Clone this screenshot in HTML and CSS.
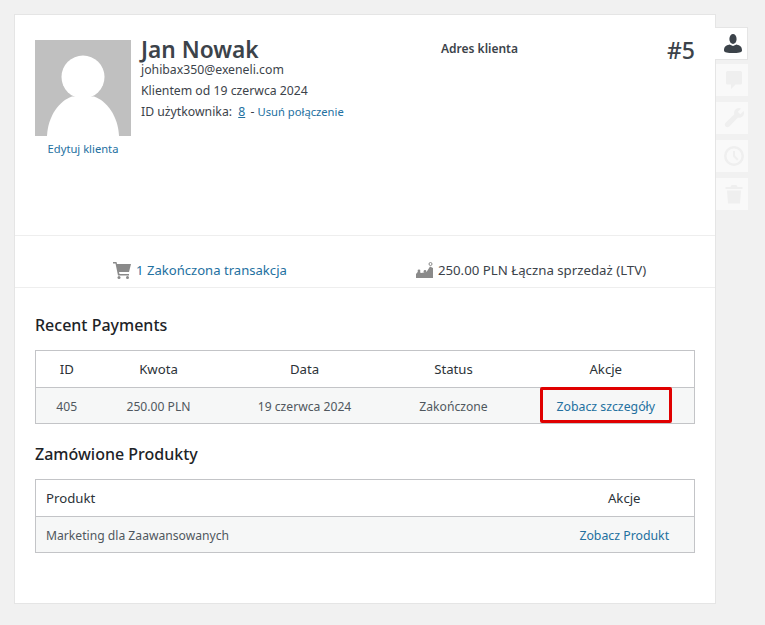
FILE: index.html
```html
<!DOCTYPE html>
<html lang="pl">
<head>
    <meta charset="UTF-8">
    <title>Klient</title>
    <link rel="stylesheet" href="styles.css">
</head>
<body>
    <div class="customer">
        <main class="customer__card">
            <section class="customer__head">
                <div class="customer__photo">
                    <svg class="customer__avatar" viewBox="0 0 96 96">
                        <rect width="96" height="96" fill="#c0c0c0" />
                        <circle cx="48" cy="37" r="21.500" fill="#fff" />
                        <path d="M12 96C13 76 24 61 37 56.500L59 56.500C72 61 83 76 84 96Z" fill="#fff" />
                    </svg>
                    <a class="link customer__edit" href="#">Edytuj klienta</a>
                </div>
                <div class="customer__info">
                    <h1 class="customer__name">Jan Nowak</h1>
                    <div class="customer__line customer__line--email">johibax350@exeneli.com</div>
                    <div class="customer__line">Klientem od 19 czerwca 2024</div>
                    <div class="customer__line">ID użytkownika:&nbsp;<a class="link customer__uid" href="#">8</a> - <a class="link customer__unlink" href="#">Usuń połączenie</a></div>
                </div>
                <div class="customer__address">Adres klienta</div>
                <div class="customer__number">#5</div>
            </section>

            <section class="stats">
                <div class="stats__item stats__item--sales">
                    <svg class="stats__icon" viewBox="0 0 18 18">
                        <path d="M0 1H3.500L4 3H18L16 11H6L6.500 13H16V14.500H5L2.500 2.500H0Z" fill="#8a8a8a" />
                        <circle cx="6" cy="16.500" r="1.500" fill="#8a8a8a" />
                        <circle cx="14.500" cy="16.500" r="1.500" fill="#8a8a8a" />
                    </svg>
                    <a class="link stats__link" href="#">1 Zakończona transakcja</a>
                </div>
                <div class="stats__item stats__item--value">
                    <svg class="stats__icon" viewBox="0 0 18 18">
                        <path d="M1 17V13L3.500 10L6 12L9 11.500L11.500 11L15 5.500L18 7V17Z" fill="#8a8a8a" />
                        <circle cx="4" cy="10" r="1.400" fill="#8a8a8a" />
                        <circle cx="10" cy="10.500" r="1.400" fill="#8a8a8a" />
                        <circle cx="15.500" cy="3" r="1.500" fill="none" stroke="#8a8a8a" />
                    </svg>
                    <span>250.00 PLN Łączna sprzedaż (LTV)</span>
                </div>
            </section>

            <section class="customer__body">
                <h2 class="section-title">Recent Payments</h2>
                <table class="list list--payments">
                    <thead>
                        <tr>
                            <th class="list__id">ID</th>
                            <th class="list__amount">Kwota</th>
                            <th class="list__date">Data</th>
                            <th class="list__status">Status</th>
                            <th>Akcje</th>
                        </tr>
                    </thead>
                    <tbody>
                        <tr>
                            <td>405</td>
                            <td>250.00 PLN</td>
                            <td>19 czerwca 2024</td>
                            <td>Zakończone</td>
                            <td class="list__marked"><a class="link" href="#">Zobacz szczegóły</a></td>
                        </tr>
                    </tbody>
                </table>

                <h2 class="section-title section-title--second">Zamówione Produkty</h2>
                <table class="list list--products">
                    <thead>
                        <tr>
                            <th class="list__product">Produkt</th>
                            <th>Akcje</th>
                        </tr>
                    </thead>
                    <tbody>
                        <tr>
                            <td class="list__product">Marketing dla Zaawansowanych</td>
                            <td><a class="link" href="#">Zobacz Produkt</a></td>
                        </tr>
                    </tbody>
                </table>
            </section>
        </main>

        <nav class="tabs">
            <a class="tabs__tab tabs__tab--active" href="#" aria-label="Klient">
                <svg class="tabs__icon" viewBox="0 0 20 20">
                    <ellipse cx="10" cy="5" rx="3.600" ry="5" />
                    <path d="M1 16.500C1 13 2.500 11.500 6.500 10.500L10 12L13.500 10.500C17.500 11.500 19 13 19 16.500C19 18.500 15 19 10 19C5 19 1 18.500 1 16.500Z" />
                </svg>
            </a>
            <a class="tabs__tab" href="#" aria-label="Notatki">
                <svg class="tabs__icon" viewBox="0 0 20 20">
                    <path d="M3.500 1H16.500Q18 1 18 2.500V13Q18 14.500 16.500 14.500H11.500L7 19V14.500H3.500Q2 14.500 2 13V2.500Q2 1 3.500 1Z" />
                </svg>
            </a>
            <a class="tabs__tab" href="#" aria-label="Narzędzia">
                <svg class="tabs__icon" viewBox="0 0 20 20">
                    <path d="M20 5C20 8.300 17 10.500 13.800 9.700L5.500 18.200C4.300 19.400 2.700 19.400 1.600 18.400C0.500 17.300 0.600 15.600 1.800 14.500L10.300 6.300C9.500 3 11.800 0 15 0C15.800 0 16.500 0.200 17 0.500L13.800 3.700L16.300 6.200L19.500 3C19.800 3.500 20 4.200 20 5Z" />
                </svg>
            </a>
            <a class="tabs__tab" href="#" aria-label="Historia">
                <svg class="tabs__icon" viewBox="0 0 20 20">
                    <path fill-rule="evenodd" d="M10 0A10 10 0 1 1 10 20A10 10 0 1 1 10 0ZM10 2.500A7.500 7.500 0 1 0 10 17.500A7.500 7.500 0 1 0 10 2.500Z" />
                    <path d="M9 5H11V9.500L14.500 13L13 14.500L9 10.500Z" />
                </svg>
            </a>
            <a class="tabs__tab" href="#" aria-label="Usuń">
                <svg class="tabs__icon" viewBox="0 0 20 20">
                    <path d="M7.500 1H12.500L13.500 3H18.500V5H1.500V3H6.500Z" />
                    <path d="M3 6.500H17L16 19.500H4Z" />
                </svg>
            </a>
        </nav>
    </div>
</body>
</html>
```

FILE: styles.css
```css
body {
    margin: 0;
    background: #f1f1f1;

    font-family: "Noto Sans", "Open Sans", sans-serif;
    font-size: 13px;
    color: #3c434a;
}

.customer {
    display: flex;
    align-items: flex-start;

    padding: 14px 0 21px 14px;
}

.customer__card {
    box-sizing: border-box;
    width: 702px;
    height: 590px;

    background: #fff;
    border: 1px solid #e5e5e5;
}

.link {
    color: #23709f;
    text-decoration: none;
}

/* head */

.customer__head {
    box-sizing: border-box;
    height: 221px;

    padding: 25px 20px 0;

    display: flex;
    align-items: flex-start;

    border-bottom: 1px solid #eee;
}

.customer__photo {
    flex: 0 0 96px;

    display: flex;
    flex-direction: column;
    align-items: center;
}

.customer__avatar {
    display: block;
    width: 96px;
    height: 96px;
}

.customer__edit {
    margin-top: 4px;

    font-size: 11.200px;
    line-height: 17px;
}

.customer__info {
    flex: 0 0 300px;

    margin-left: 10px;
}

.customer__name {
    margin: 0;

    font-size: 22.700px;
    font-weight: 600;
    line-height: 20px;

    color: #3c434a;
}

.customer__line {
    font-size: 12.250px;
    line-height: 21px;
}

.customer__line--email {
    line-height: 20px;
}

.customer__uid {
    margin: 0 2px 0 3px;
    text-decoration: underline;
}

.customer__unlink {
    font-size: 11.200px;
}

.customer__address {
    font-size: 12px;
    font-weight: 600;
    line-height: 18px;
}

.customer__number {
    margin-left: auto;

    font-size: 23px;
    font-weight: 500;
    line-height: 20px;
}

/* stats */

.stats {
    box-sizing: border-box;
    height: 52px;

    padding: 0 20px;

    display: flex;
    align-items: center;

    border-bottom: 1px solid #eee;
    font-size: 13.250px;
}

.stats__item {
    display: flex;
    align-items: center;
    padding-top: 16px;
}

.stats__item--sales {
    margin-left: 78px;
}

.stats__item--value {
    margin-left: 128px;
}

.stats__link {
    font-size: 13.100px;
}

.stats__icon {
    flex: 0 0 18px;
    width: 18px;
    height: 18px;

    margin-right: 5px;
}

/* tables */

.customer__body {
    padding: 0 20px;
}

.section-title {
    margin: 26px 0 14px;

    font-size: 16px;
    font-weight: 500;
    line-height: 22px;

    color: #1d2327;
}

.section-title--second {
    margin: 19px 0 14px;
}

.list {
    width: 100%;

    border-collapse: collapse;
    table-layout: fixed;
    border: 1px solid #c3c4c7;

    font-size: 12.150px;
    text-align: center;
}

.list th {
    box-sizing: border-box;
    height: 37px;
    padding: 0 10px;

    font-size: 13.200px;
    font-weight: 400;

    color: #2c3338;
    border-bottom: 1px solid #c3c4c7;
}

.list td {
    box-sizing: border-box;
    height: 36px;
    padding: 1px 10px 0;

    background: #f6f7f7;
    color: #50575e;
}

.list td .link {
    font-size: 12.300px;
}

.list__id {
    width: 62px;
}

.list__amount {
    width: 122px;
}

.list__date {
    width: 170px;
}

.list__status {
    width: 128px;
}

.list .list__product {
    width: 519px;
    text-align: left;
}

.list__marked {
    position: relative;
}

.list__marked::after {
    content: '';

    position: absolute;
    top: -1px;
    left: 22px;
    right: 22px;
    bottom: 0;

    border: 3px solid #e00000;
    border-radius: 2px;
}

/* side tabs */

.tabs {
    flex: 0 0 32px;

    margin-top: 13px;

    display: flex;
    flex-direction: column;
    gap: 6px;
}

.tabs__tab {
    box-sizing: border-box;
    height: 32px;
    padding-left: 3px;

    display: flex;
    align-items: center;
    justify-content: center;

    background: #f9f9f9;
    color: #efefef;
}

.tabs__tab--active {
    height: 33px;
    margin-bottom: -2px;
    margin-left: -1px;
    width: 33px;

    background: #fff;
    border: 1px solid #e5e5e5;
    border-left: 0;
    color: #3c434a;
}

.tabs__icon {
    width: 20px;
    height: 20px;

    fill: currentColor;
}
```
